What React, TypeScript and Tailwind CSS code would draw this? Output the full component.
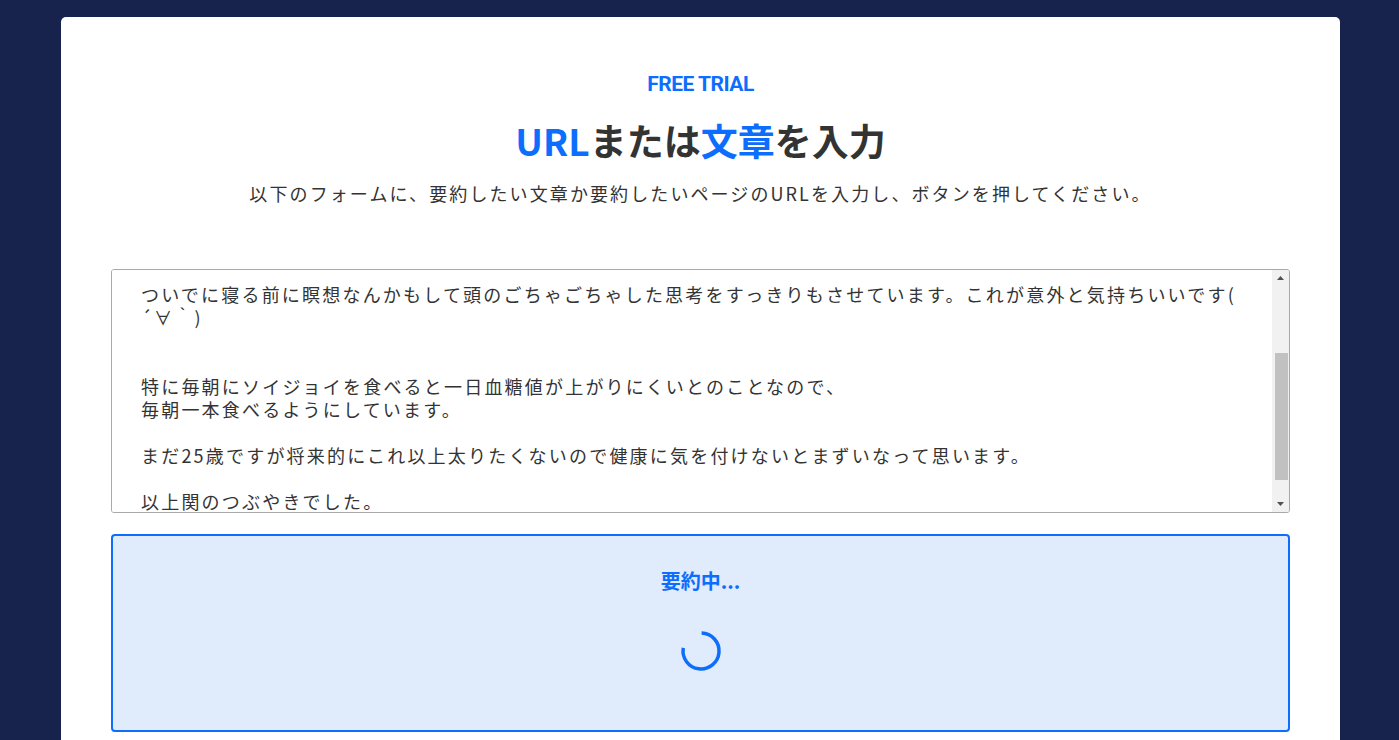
import { useEffect, useRef } from "react";

const body = [
  "こんにちは、関です。",
  "最近は健康のために毎日ウォーキングをしています。",
  "",
  "夜は早めに寝るようにしていて、",
  "",
  "ついでに寝る前に瞑想なんかもして頭のごちゃごちゃした思考をすっきりもさせています。これが意外と気持ちいいです(",
  "´∀｀)",
  "",
  "",
  "特に毎朝にソイジョイを食べると一日血糖値が上がりにくいとのことなので、",
  "毎朝一本食べるようにしています。",
  "",
  "まだ25歳ですが将来的にこれ以上太りたくないので健康に気を付けないとまずいなって思います。",
  "",
  "以上関のつぶやきでした。",
].join("\n");

const jp = "font-['Noto_Sans_CJK_JP','Noto_Sans',sans-serif]";

function Arrow({ down }: { down?: boolean }) {
  return (
    <div className="flex h-[16px] items-center justify-center">
      <svg width="7" height="4" viewBox="0 0 7 4">
        <path d={down ? "M0 0H7L3.5 4Z" : "M0 4H7L3.5 0Z"} fill="#505050" />
      </svg>
    </div>
  );
}

export default function App() {
  const areaRef = useRef<HTMLTextAreaElement>(null);

  useEffect(() => {
    // keep the view scrolled to where the screenshot shows it
    if (areaRef.current) areaRef.current.scrollTop = 131;
  }, []);

  return (
    <div className="flex h-screen flex-col overflow-hidden bg-[#17224d] pt-[17px] pr-[59px] pl-[61px]">
      <div className="flex-1 rounded-t-[5px] bg-white px-[50px] pt-[53px]">
        <div className="flex flex-col items-center">
          <p className="font-['Roboto',sans-serif] text-[21px] leading-7 font-bold tracking-[-0.5px] text-[#0d6efd]">
            FREE TRIAL
          </p>
          <h1 className={`${jp} mt-[18px] text-[37px] leading-[48px] font-bold text-[#333]`}>
            <span className="text-[#0d6efd]">URL</span>または
            <span className="text-[#0d6efd]">文章</span>を入力
          </h1>
          <p className={`${jp} mt-[15px] text-[18px] leading-7 tracking-[2.1px] text-[#333]`}>
            以下のフォームに、要約したい文章か要約したいページのURLを入力し、ボタンを押してください。
          </p>
        </div>

        {/* textarea with a drawn scrollbar */}
        <div className="mt-[62px] flex h-[244px] overflow-hidden rounded-[3px] border border-[#a9a9a9] bg-white">
          <textarea
            ref={areaRef}
            defaultValue={body}
            className={`${jp} block h-full min-w-0 flex-1 resize-none overflow-hidden bg-white py-[29px] pr-[12px] pl-[29px] text-[18px] leading-[23px] tracking-[2.2px] whitespace-pre-wrap text-[#333] outline-none`}
          />
          <div className="flex w-[17px] flex-col bg-[#f1f1f1]">
            <Arrow />
            <div className="flex-1 pr-[1px] pl-[3px]">
              <div className="mt-[67px] h-[127px] bg-[#c1c1c1]" />
            </div>
            <Arrow down />
          </div>
        </div>

        <div className="mt-[21px] flex h-[198px] flex-col items-center rounded-[4px] border-2 border-[#0d6efd] bg-[#e0ebfc] pt-[31px]">
          <p className={`${jp} text-[20px] leading-7 font-bold text-[#0d6efd]`}>要約中...</p>
          <svg className="mt-[32px]" width="48" height="48" viewBox="0 0 48 48">
            <path
              d="M24.6 6 A18 18 0 1 1 6.3 20.9"
              fill="none"
              stroke="#0d6efd"
              strokeWidth="3.5"
            />
          </svg>
        </div>
      </div>
    </div>
  );
}
